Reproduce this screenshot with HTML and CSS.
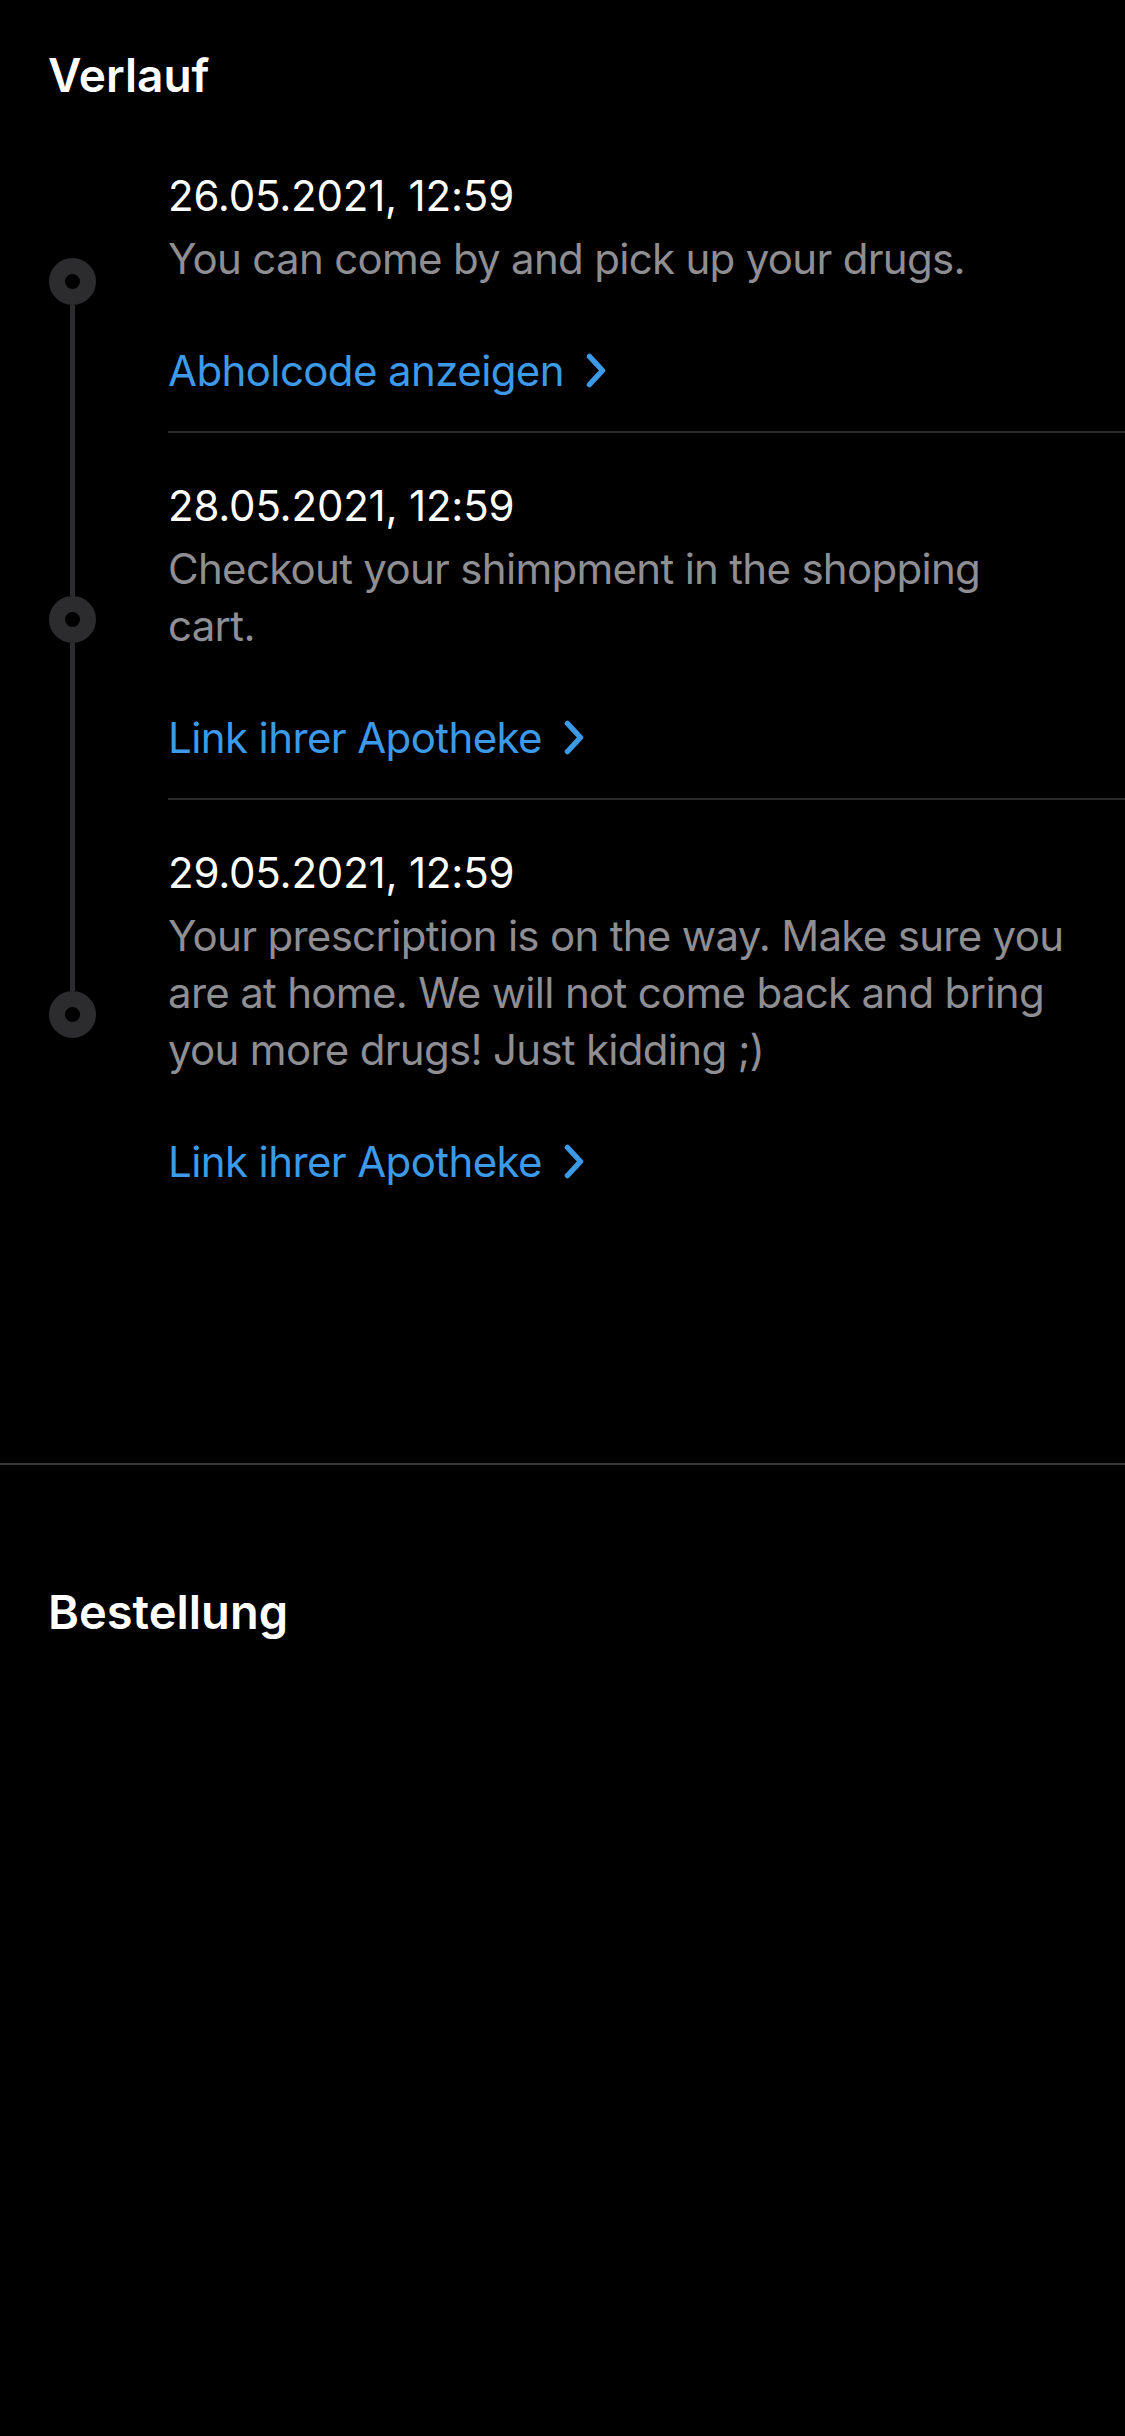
FILE: index.html
```html
<!DOCTYPE html>
<html lang="de">
<head>
<meta charset="utf-8">
<title>Verlauf</title>
<link rel="stylesheet" href="styles.css">
</head>
<body>
<main class="screen">
  <h2 class="section-title verlauf">Verlauf</h2>
  <ol class="timeline">
    <li class="event first">
      <div class="rail"><span class="seg top"></span><span class="node"></span><span class="seg bottom"></span></div>
      <div class="body">
        <div class="date">26.05.2021, 12:59</div>
        <p class="desc">You can come by and pick up your drugs.</p>
        <a class="link" href="#">Abholcode anzeigen<svg class="chev" viewBox="0 0 20 35" width="20" height="35"><path d="M3.5 3.5 L16.5 17.5 L3.5 31.5"/></svg></a>
      </div>
    </li>
    <li class="event">
      <div class="rail"><span class="seg top"></span><span class="node"></span><span class="seg bottom"></span></div>
      <div class="body">
        <div class="date">28.05.2021, 12:59</div>
        <p class="desc">Checkout your shimpment in the shopping cart.</p>
        <a class="link" href="#">Link ihrer Apotheke<svg class="chev" viewBox="0 0 20 35" width="20" height="35"><path d="M3.5 3.5 L16.5 17.5 L3.5 31.5"/></svg></a>
      </div>
    </li>
    <li class="event last">
      <div class="rail"><span class="seg top"></span><span class="node"></span><span class="seg bottom"></span></div>
      <div class="body">
        <div class="date">29.05.2021, 12:59</div>
        <p class="desc">Your prescription is on the way. Make sure you are at home. We will not come back and bring you more drugs! Just kidding ;)</p>
        <a class="link" href="#">Link ihrer Apotheke<svg class="chev" viewBox="0 0 20 35" width="20" height="35"><path d="M3.5 3.5 L16.5 17.5 L3.5 31.5"/></svg></a>
      </div>
    </li>
  </ol>
  <hr class="divider">
  <h2 class="section-title bestellung">Bestellung</h2>
</main>
</body>
</html>
```
FILE: styles.css
```css
html, body {
  margin: 0;
  padding: 0;
  background: #000;
}
body {
  font-family: Inter, "Noto Sans", "Liberation Sans", sans-serif;
  color: #fff;
  width: 1125px;
  min-height: 2436px;
}
.screen {
  display: flex;
  flex-direction: column;
}
.section-title {
  margin: 0;
  padding-left: 48px;
  font-size: 46px;
  line-height: 56px;
  font-weight: 600;
  color: #fff;
}
.verlauf {
  margin-top: 47px;
}
.bestellung {
  margin-top: 119px;
  font-size: 47px;
}
.timeline {
  list-style: none;
  margin: 20px 0 0;
  padding: 0;
}
.event {
  display: flex;
}
.rail {
  width: 48px;
  margin-left: 48px;
  margin-right: 72px;
  display: flex;
  flex-direction: column;
  align-items: center;
  flex: none;
}
.seg {
  flex: 1 1 0;
  width: 5px;
  background: #2c2c2e;
}
.seg.top {
  padding-top: 6px;
}
.first .seg.top,
.last .seg.bottom {
  background: transparent;
}
.node {
  flex: none;
  width: 15px;
  height: 15px;
  border: 16.5px solid #2c2c2e;
  border-radius: 50%;
  background: #000;
}
.body {
  flex: 1;
  padding: 44px 48px 32px 0;
  border-bottom: 2px solid #2a2a2c;
  letter-spacing: -0.7px;
}
.last .body {
  border-bottom: none;
}
.date {
  font-size: 42px;
  line-height: 57px;
  color: #fff;
  margin-bottom: 6px;
  letter-spacing: -0.2px;
}
.desc {
  margin: 0;
  font-size: 42px;
  line-height: 57px;
  color: #8e8e93;
}
.link {
  margin-top: 55px;
  display: flex;
  align-items: center;
  gap: 22px;
  font-size: 42px;
  line-height: 57px;
  color: #3d9ae8;
  text-decoration: none;
  letter-spacing: -0.6px;
}
.chev {
  fill: none;
  stroke: #3d9ae8;
  stroke-width: 5.5;
  stroke-linecap: round;
  stroke-linejoin: round;
}
.divider {
  margin: 241px 0 0;
  border: none;
  height: 2px;
  background: #38383a;
}
```
